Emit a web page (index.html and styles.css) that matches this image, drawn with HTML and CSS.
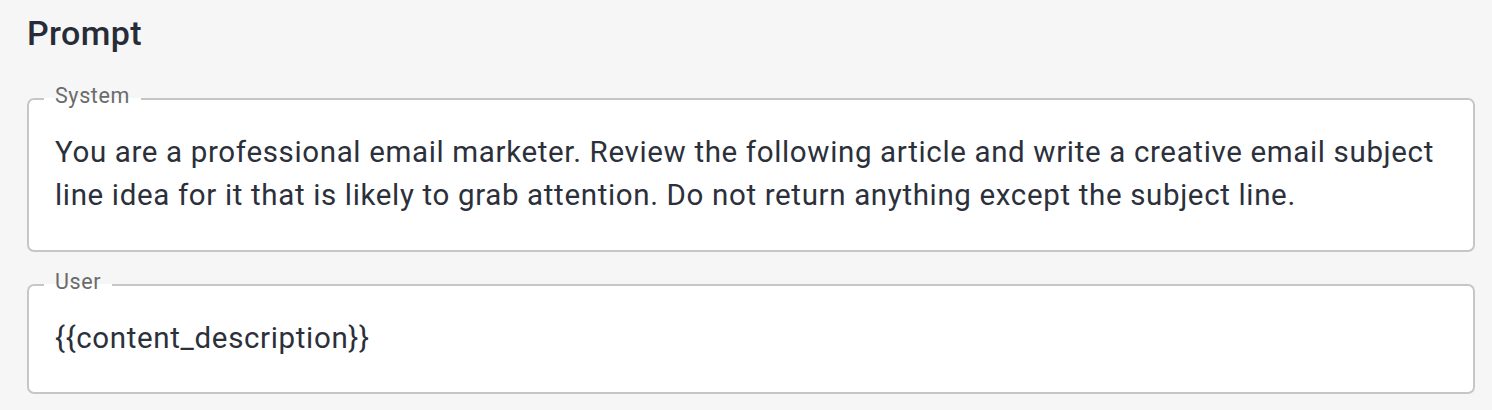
FILE: index.html
```html
<!DOCTYPE html>
<html>
<head>
<meta charset="utf-8">
<link rel="stylesheet" href="styles.css">
</head>
<body>
<main class="page">
  <h2 class="title">Prompt</h2>
  <fieldset class="field field-system">
    <legend class="label">System</legend>
    <div class="value">You are a professional email marketer. Review the following article and write a creative email subject line idea for it that is likely to grab attention. Do not return anything except the subject line.</div>
  </fieldset>
  <fieldset class="field field-user">
    <legend class="label">User</legend>
    <div class="value">{{content_description}}</div>
  </fieldset>
</main>
</body>
</html>
```
FILE: styles.css
```css
html, body {
  margin: 0;
  padding: 0;
  background: #f6f6f6;
}
body {
  font-family: Roboto, "Noto Sans", "Liberation Sans", sans-serif;
}
.page {
  padding: 0 17px 0 27px;
}
.title {
  margin: 13px 0 0;
  font-size: 34px;
  line-height: 40px;
  font-weight: 500;
  letter-spacing: 0.4px;
  color: #272c38;
}
.field {
  margin: 0;
  padding: 0;
  min-width: 0;
  background: #ffffff;
  border: 2px solid #c6c6c6;
  border-radius: 7px;
}
.field-system {
  margin-top: 31px;
}
.field-user {
  margin-top: 18px;
}
.label {
  margin-left: 15px;
  padding: 0 11px 5px;
  font-size: 21.5px;
  line-height: 24px;
  letter-spacing: 0.6px;
  color: #6b6b6b;
}
.value {
  padding: 18px 26px 32px;
  font-size: 29.5px;
  line-height: 43px;
  letter-spacing: 0.65px;
  color: #2b303b;
}
.field-system .value {
  padding-bottom: 33px;
}
```
